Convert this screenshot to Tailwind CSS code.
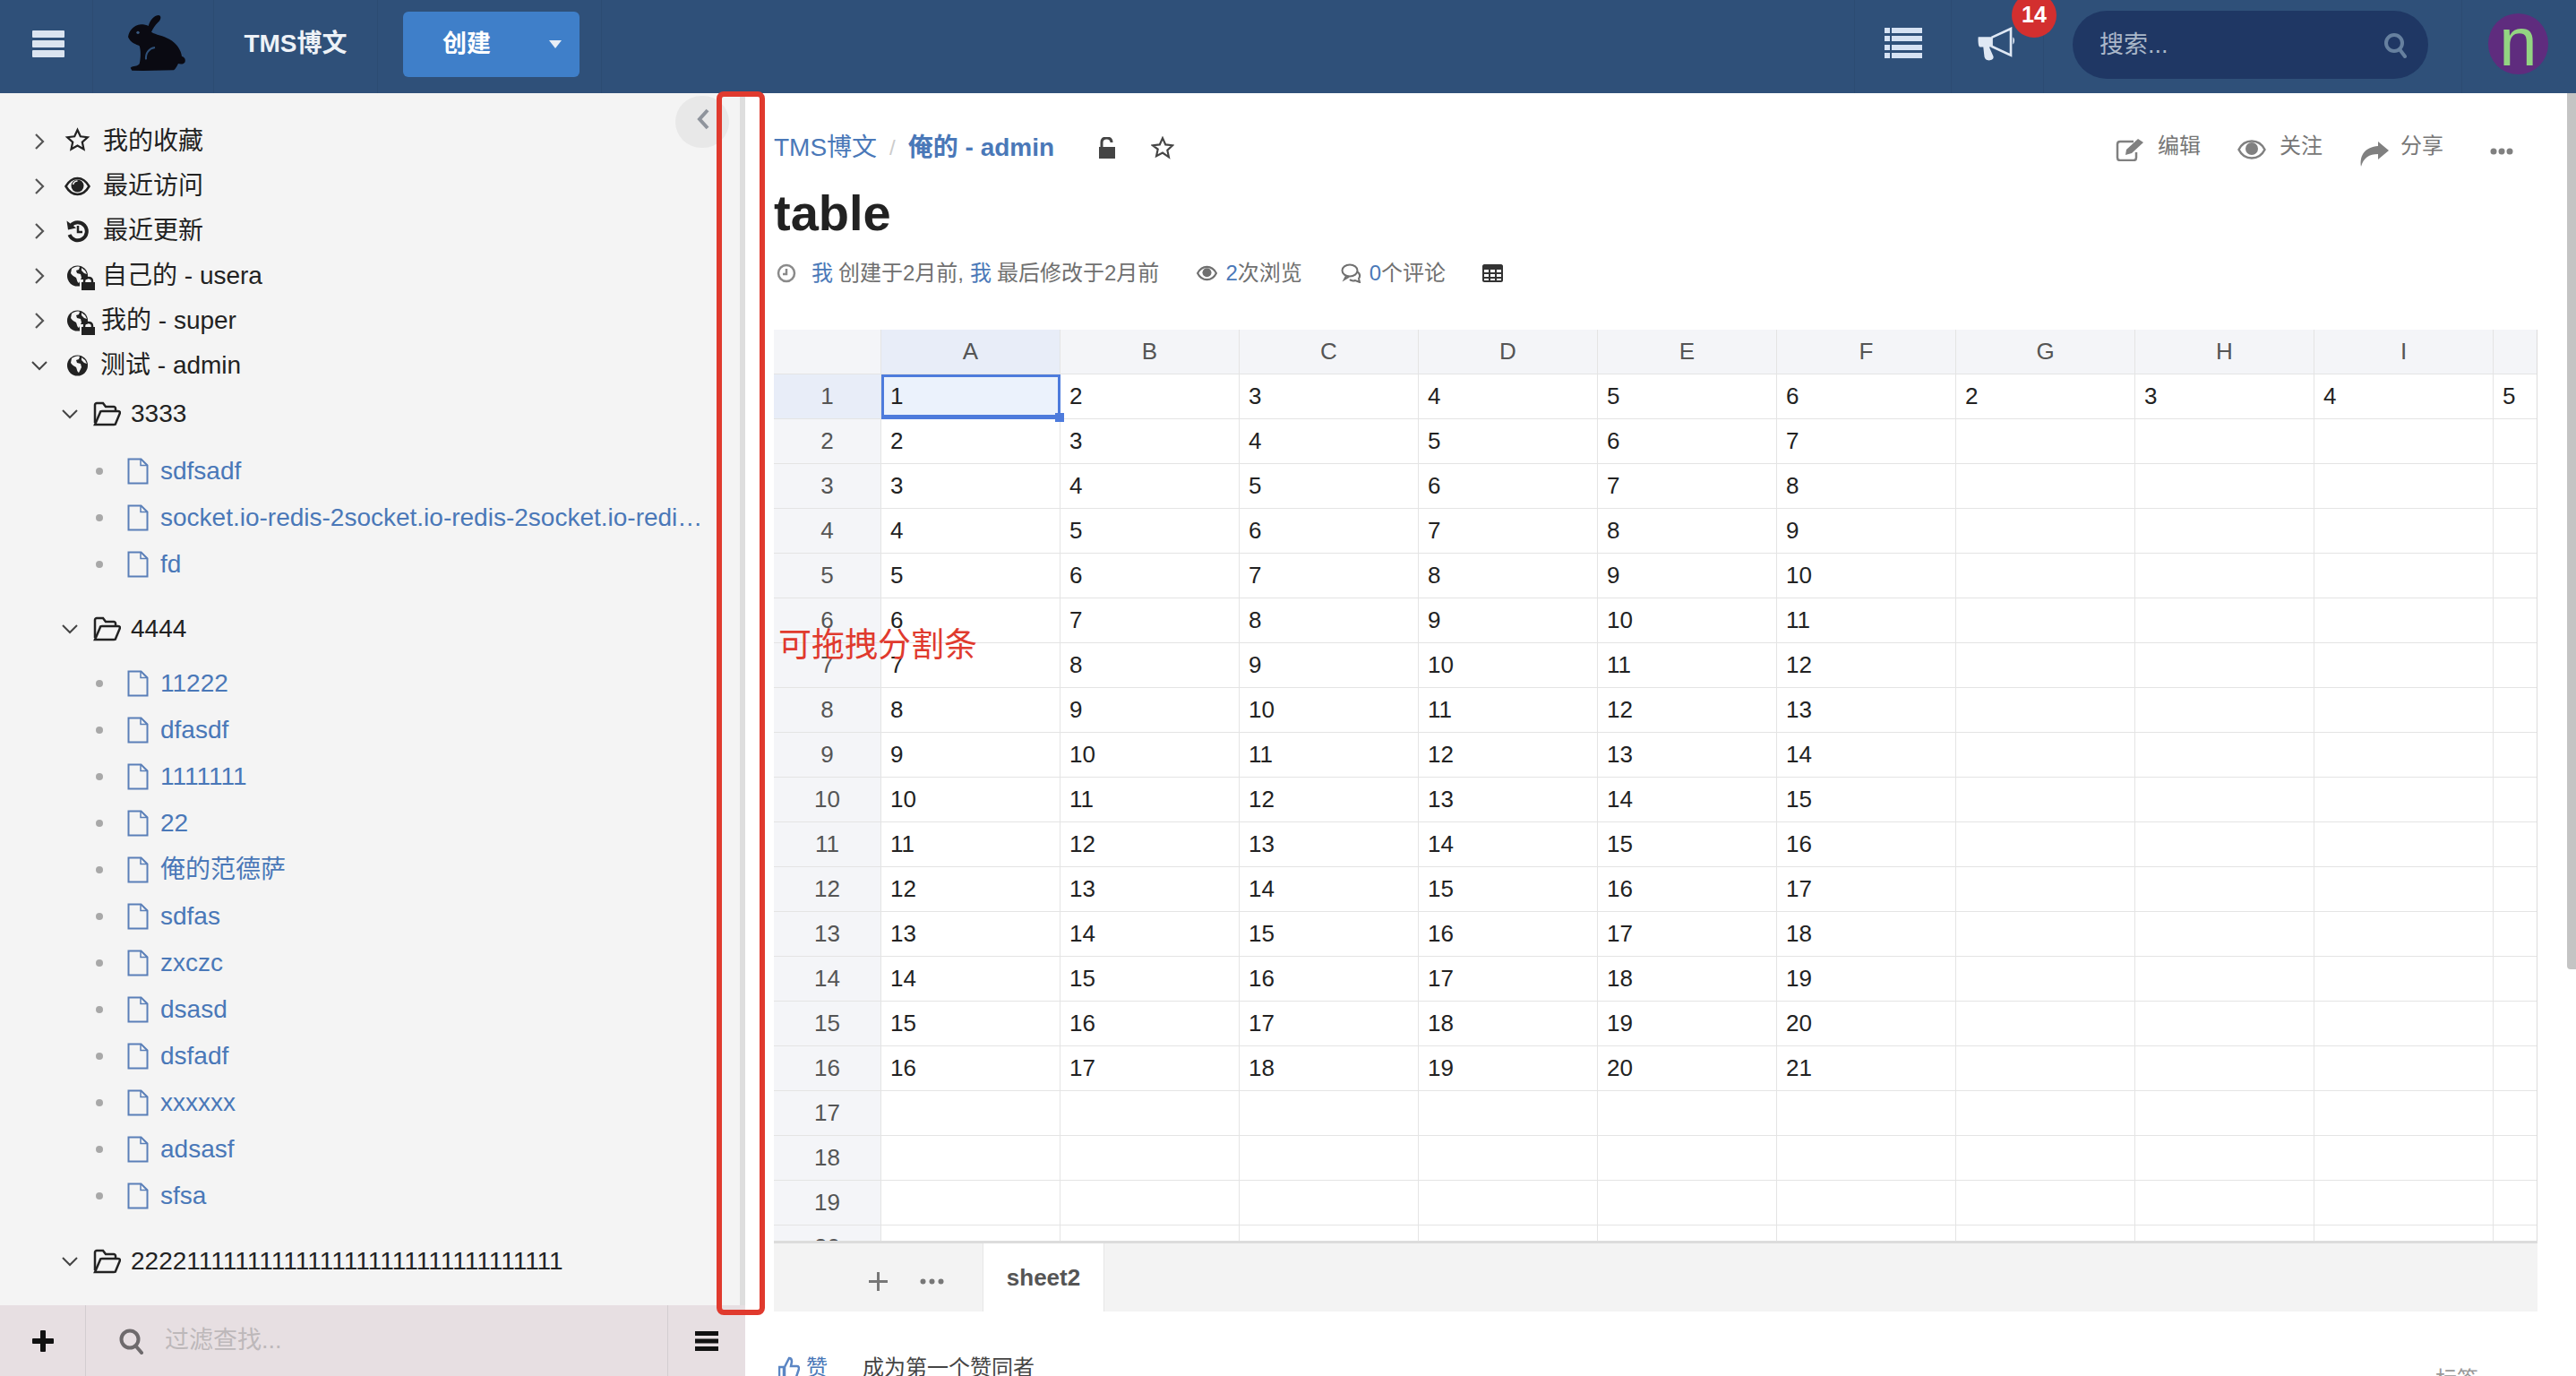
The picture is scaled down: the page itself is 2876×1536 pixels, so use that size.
<!DOCTYPE html>
<html lang="zh">
<head>
<meta charset="UTF-8">
<title>table - TMS博文</title>
<script src="https://cdn.jsdelivr.net/npm/@tailwindcss/browser@4"></script>
</head>
<body class="h-[1536px] w-[2876px] overflow-hidden bg-white font-['Liberation_Sans','Noto_Sans_CJK_SC',sans-serif] text-[28px] text-[#222]">
<!-- top bar -->
<header class="flex h-[104px] items-stretch bg-[#2f5079] text-white">
  <div class="flex w-[104px] items-center border-r border-[#2c4b72] pb-[6px] pl-[36px]">
    <svg width="36" height="30" viewBox="0 0 36 30" fill="#dbe4f0"><rect width="36" height="8" y="0" rx="1"/><rect width="36" height="8" y="11" rx="1"/><rect width="36" height="8" y="22" rx="1"/></svg>
  </div>
  <div class="flex w-[135px] items-center border-r border-[#2c4b72] pb-[9px] pl-[39px]">
    <svg width="65" height="64" viewBox="42 30 195 190" fill="#0a0a12"><path d="M110 68C115 50 128 32 145 32C155 35 152 48 142 56C132 66 125 78 120 88C135 98 160 100 180 112C205 125 220 150 222 170C232 172 236 182 232 190C226 197 216 196 210 194C205 205 200 212 195 216L92 218L55 217L50 208C60 200 72 205 80 195C85 175 85 150 80 135C70 130 50 125 42 105C45 85 60 65 85 63C95 63 105 65 110 68Z"/><circle cx="75" cy="90" r="5" fill="#3a5a80"/><path d="M102 180C100 158 112 143 132 140" fill="none" stroke="#2f5079" stroke-width="6"/></svg>
  </div>
  <div class="flex w-[183px] items-center justify-center border-r border-[#2c4b72] pb-[6px] text-[28px] font-bold text-[#eef2f7]">TMS博文</div>
  <div class="flex w-[250px] items-center border-r border-[#2c4b72] pb-[5px] pl-[28px]">
    <div class="flex h-[73px] w-[197px] items-center rounded-md bg-[#3f7fc9] pl-[44px] pr-[20px] text-[27px] font-bold">
      <span class="flex-1">创建</span>
      <svg width="14" height="9" viewBox="0 0 14 9" fill="#e8eef6"><path d="M0 0h14L7 9z"/></svg>
    </div>
  </div>
  <div class="flex-1"></div>
  <div class="flex w-[109px] items-center justify-center border-x border-[#2c4b72] pb-[8px]">
    <svg width="42" height="34" viewBox="0 0 42 34" fill="#d6e2f3"><rect width="6" height="6" y="0"/><rect x="8" width="34" height="6" y="0"/><rect width="6" height="6" y="9"/><rect x="8" width="34" height="6" y="9"/><rect width="6" height="6" y="19"/><rect x="8" width="34" height="6" y="19"/><rect width="6" height="6" y="28"/><rect x="8" width="34" height="6" y="28"/></svg>
  </div>
  <div class="relative flex w-[103px] items-center border-r border-[#2c4b72] pb-[6px] pl-[28px]">
    <svg width="43" height="38" viewBox="50 90 130 115"><path d="M100 126L165 96V186L100 156" fill="none" stroke="#dfe8f4" stroke-width="8"/><path d="M172 125c7 3 7 20 0 24z" fill="#dfe8f4"/><path d="M55 124H104V158H92L106 190C108 200 98 204 88 203C80 202 75 195 75 185L72 158H60C54 156 54 128 55 124Z" fill="#dfe8f4"/></svg>
    <span class="absolute left-[67px] top-[-8px] flex h-[50px] w-[50px] items-center justify-center rounded-full bg-[#d32f2f] text-[25px] font-bold text-white">14</span>
  </div>
  <div class="flex w-[467px] items-center border-r border-[#2c4b72] pb-[4px] pl-[32px]">
    <div class="flex h-[76px] w-[397px] items-center rounded-full bg-[#1f3764] pl-[30px] pr-[24px] text-[27px] text-[#aab7c9]">
      <span class="flex-1">搜索...</span>
      <svg width="26" height="30" viewBox="0 0 26 30" fill="none" stroke="#66809f" stroke-width="4"><circle cx="12" cy="13" r="9"/><path d="M18 20l6 8" stroke-linecap="round"/></svg>
    </div>
  </div>
  <div class="flex w-[127px] items-center pb-[6px] pl-[29px]">
    <div class="flex h-[68px] w-[67px] items-center justify-center overflow-hidden rounded-full bg-[#5f2c7e] pb-[4px] text-[76px] leading-none text-[#93d582]">n</div>
  </div>
</header>

<div class="relative flex h-[1432px]">
  <!-- sidebar -->
  <aside class="relative flex w-[832px] shrink-0 flex-col border-r-[6px] border-[#dedede] bg-[#f4f4f4]">
    <div class="absolute left-[754px] top-[3px] flex h-[58px] w-[60px] items-center rounded-full bg-[#e8e8e8] pb-[6px] pl-[24px]">
      <svg width="14" height="24" viewBox="0 0 14 24" fill="none" stroke="#8f949c" stroke-width="4"><path d="M12 2L3 12l9 10"/></svg>
    </div>
    <nav id="tree" class="flex-1 overflow-hidden pt-[29px]"></nav>
    <div class="-mr-[6px] flex h-[79px] items-center bg-[#e7dfe2]">
      <div class="flex h-full w-[96px] items-center justify-center border-r border-[#d3cdd0]">
        <svg width="24" height="24" viewBox="0 0 24 24" fill="#111"><rect x="9" width="6" height="24" rx="1"/><rect y="9" width="24" height="6" rx="1"/></svg>
      </div>
      <div class="flex h-full flex-1 items-center gap-[24px] pl-[36px] text-[27px] text-[#bdb8ba]">
        <svg width="28" height="30" viewBox="0 0 28 30" fill="none" stroke="#6e6a6c" stroke-width="4"><circle cx="13" cy="13" r="9.5"/><path d="M20 21l6 7" stroke-linecap="round"/></svg>
        <span>过滤查找...</span>
      </div>
      <div class="flex h-full w-[87px] items-center justify-center border-l border-[#d3cdd0]">
        <svg width="26" height="22" viewBox="0 0 26 22" fill="#111"><rect width="26" height="5"/><rect y="8.500" width="26" height="5"/><rect y="17" width="26" height="5"/></svg>
      </div>
    </div>
  </aside>

  <!-- article -->
  <main class="w-[2034px] shrink-0 overflow-hidden pl-[32px] pr-[33px]">
    <div class="mt-[40px] flex h-[42px] items-center text-[28px] text-[#4a78b8]">
      <span>TMS博文</span>
      <span class="mx-[14px] text-[24px] text-[#ccc]">/</span>
      <span class="font-bold">俺的 - admin</span>
      <svg class="ml-[49px]" width="20" height="24" viewBox="0 0 20 24" fill="#444"><path d="M1 11h18v13H1z"/><path d="M4 11V6c0-3 2-5 5.500-5S15 3 15 6" fill="none" stroke="#444" stroke-width="3"/></svg>
      <svg class="ml-[39px]" width="26" height="26" viewBox="0 0 24 24" fill="none" stroke="#444" stroke-width="2"><path d="M12 2l3 6.700 7.300.8-5.400 4.900 1.500 7.200L12 17.200l-6.400 3.400 1.500-7.200L1.700 9.500 9 8.700z"/></svg>
      <div class="ml-auto flex items-center text-[24px] text-[#777]">
        <svg class="relative top-[2px]" width="33" height="26" viewBox="0 0 33 26" fill="none" stroke="#808080" stroke-width="2.500"><path d="M20 4H5C3 4 2 5 2 7v15c0 2 1 3 3 3h15c2 0 3-1 3-3v-6"/><path d="M11 19l1-6L25 1l6 4-13 12z" fill="#808080" stroke="none"/></svg>
        <span class="relative -top-[2px] ml-[14px]">编辑</span>
        <svg class="relative top-[2px] ml-[41px]" width="32" height="22" viewBox="0 0 32 22" fill="none" stroke="#808080" stroke-width="2.500"><path d="M1.500 11C5 4 10 1.500 16 1.500S27 4 30.500 11C27 18 22 20.500 16 20.500S5 18 1.500 11z"/><circle cx="16" cy="10" r="7" fill="#808080" stroke="none"/></svg>
        <span class="relative -top-[2px] ml-[15px]">关注</span>
        <svg class="relative top-[7px] ml-[41px]" width="33" height="28" viewBox="0 0 33 28" fill="#808080"><path d="M21 0l12 10-12 10v-6C11 14 5 18 2 28 0 15 7 6 21 5z"/></svg>
        <span class="relative -top-[2px] ml-[13px]">分享</span>
        <svg class="relative top-[4px] ml-[52px] mr-[27px]" width="26" height="8" viewBox="0 0 26 8" fill="#808080"><circle cx="4" cy="4" r="3.500"/><circle cx="13" cy="4" r="3.500"/><circle cx="22" cy="4" r="3.500"/></svg>
      </div>
    </div>
    <h1 class="mt-[18px] text-[56px] font-bold leading-[68px] text-[#222]">table</h1>
    <div class="mt-[18px] flex h-[30px] items-center text-[24px] text-[#707070]">
      <svg class="ml-[3px]" width="22" height="22" viewBox="0 0 22 22" fill="none" stroke="#8a8a8a" stroke-width="2.500"><circle cx="11" cy="11" r="9"/><path d="M11 6v6H7"/></svg>
      <span class="ml-[17px] text-[#4a78b8]">我</span>
      <span class="ml-[6px]">创建于2月前,</span>
      <span class="ml-[7px] text-[#4a78b8]">我</span>
      <span class="ml-[6px]">最后修改于2月前</span>
      <svg class="ml-[42px]" width="23" height="18" viewBox="0 0 32 24" fill="none" stroke="#707070" stroke-width="3"><path d="M1.500 12C5 5 10 2 16 2s11 3 14.500 10C27 19 22 22 16 22S5 19 1.500 12z"/><circle cx="16" cy="11" r="7" fill="#707070" stroke="none"/></svg>
      <span class="ml-[9px] text-[#4a78b8]">2</span><span>次浏览</span>
      <svg class="ml-[43px]" width="24" height="22" viewBox="0 0 24 22" fill="none" stroke="#707070" stroke-width="2"><ellipse cx="10" cy="8" rx="8.500" ry="6.500"/><path d="M6 14l-2 4 5-3M18 9c3 2 4 5 2 8l1 4-5-2c-2 1-5 0-6-1"/></svg>
      <span class="ml-[8px] text-[#4a78b8]">0</span><span>个评论</span>
      <svg class="ml-[41px]" width="23" height="20" viewBox="0 0 23 20" fill="#333"><path d="M0 2C0 1 1 0 2 0h19c1 0 2 1 2 2v16c0 1-1 2-2 2H2c-1 0-2-1-2-2zm2 4v3h5V6zm7 0v3h5V6zm7 0v3h5V6zM2 11v3h5v-3zm7 0v3h5v-3zm7 0v3h5v-3zM2 16v2h5v-2zm7 0v2h5v-2zm7 0v2h5v-2z"/></svg>
    </div>

    <!-- sheet -->
    <div id="sheet" class="mt-[48px] grid h-[1020px] grid-cols-[120px_repeat(9,200px)_49px] auto-rows-[50px] overflow-hidden border-b-[3px] border-r border-[#dcdcdc] text-[26px] text-[#222]"></div>
    <div class="flex h-[76px] items-stretch bg-[#f3f3f3] text-[#666]">
      <div class="flex w-[127px] items-center justify-end pt-[8px]">
        <svg width="21" height="21" viewBox="0 0 21 21" fill="#777"><rect x="9" width="3" height="21"/><rect y="9" width="21" height="3"/></svg>
      </div>
      <div class="ml-[36px] flex w-[70px] items-center pt-[8px]">
        <svg width="27" height="7" viewBox="0 0 27 7" fill="#777"><circle cx="3.500" cy="3.500" r="3"/><circle cx="13.500" cy="3.500" r="3"/><circle cx="23.500" cy="3.500" r="3"/></svg>
      </div>
      <div class="flex w-[136px] items-center justify-center border-x border-[#e6e6e6] bg-white text-[26px] font-bold text-[#555]">sheet2</div>
    </div>
    <div class="mt-[47px] flex items-center text-[24px] leading-[32px]">
      <svg class="ml-[5px]" width="24" height="26" viewBox="0 0 24 26" fill="none" stroke="#5b86c4" stroke-width="2.500"><path d="M7 12l5-10c2 0 3 2 3 4l-1 5h7c2 0 2 2 2 3l-3 9c0 1-1 2-3 2H7zM1 12h5v13H1z"/></svg>
      <span class="ml-[7px] text-[#4a78b8]">赞</span>
      <span class="ml-[39px] text-[#444]">成为第一个赞同者</span>
      <span class="relative top-[13px] ml-auto mr-[66px] text-[#999]">标签</span>
    </div>
  </main>

  <!-- page scrollbar -->
  <div class="h-[978px] w-[10px] rounded-bl-sm bg-[#c4c4c4]"></div>

  <!-- annotation drawn over the screenshot -->
  <div class="absolute left-[800px] top-[-2px] h-[1366px] w-[54px] rounded-lg border-[6px] border-[#e03a2e]"></div>
  <div class="absolute left-[869px] top-[595px] text-[37px] leading-[44px] text-[#e03a2e]">可拖拽分割条</div>
</div>

<script>
  const caret = {
    right: '<svg width="12" height="20" viewBox="0 0 12 20" fill="none" stroke="#555" stroke-width="2.200"><path d="M2 2l8 8-8 8"/></svg>',
    down: '<svg width="18" height="12" viewBox="0 0 18 12" fill="none" stroke="#444" stroke-width="2"><path d="M1 2l8 8 8-8"/></svg>'
  };
  const globe = '<circle cx="14.500" cy="17" r="11.500" fill="#222"/><path d="M8 9c3-2 6-3 9-2l-1 3-3 1 1 3 4 1 1 4-3 6c-2-1-2-4-3-6-2-1-5-3-6-5zM19 8l4 3 2 4-3-1-3-3z" fill="#f4f4f4"/>';
  const lock = '<path d="M17 21h18v13H17z" fill="#f4f4f4"/><path d="M19 24h15v9H19z" fill="#222"/><path d="M22 24v-1c0-3 2-4 4.500-4s4.500 1 4.500 4v1" fill="none" stroke="#222" stroke-width="2.500"/>';
  const rowIcons = {
    star: '<path d="M14.500 4l3.300 7.300 8 .9-6 5.400 1.700 7.900-7-4-7 4 1.700-7.900-6-5.400 8-.9z" fill="none" stroke="#222" stroke-width="2.200"/>',
    eye: '<path d="M1.500 17C5 11 9 8 14.500 8S24 11 27.500 17C24 23 20 26 14.500 26S5 23 1.500 17z" fill="none" stroke="#222" stroke-width="2.500"/><circle cx="14.500" cy="16.500" r="7" fill="#222"/><path d="M9.500 15c1-3 3-4 5-4" fill="none" stroke="#f4f4f4" stroke-width="1.500"/>',
    history: '<path d="M7 11A10 10 0 1 1 5.500 21" fill="none" stroke="#222" stroke-width="4"/><path d="M2.500 5.500l1.500 10 9-2z" fill="#222"/><path d="M15 11v7h5" fill="none" stroke="#222" stroke-width="2.500"/>',
    globeLock: globe + lock,
    globe: globe
  };
  const icon = (name) => `<svg width="36" height="34" viewBox="0 0 36 34">${rowIcons[name]}</svg>`;
  const folder = '<svg width="31" height="28" viewBox="0 0 31 28" fill="none" stroke="#222" stroke-width="2.500"><path d="M2 24V4c0-1 1-2 2-2h7l3 4h9c1 0 2 1 2 2v3"/><path d="M2 26l6-14c0-1 1-1 2-1h18c2 0 2 1 2 2l-5 12c0 1-1 1-2 1z"/></svg>';
  const file = '<svg width="24" height="30" viewBox="0 0 24 30" fill="none" stroke="#5a7fb8" stroke-width="2"><path d="M1.500 1.500h14l7 7v20h-21z"/><path d="M15 1.500v7h7.500" stroke-width="1.500"/></svg>';

  const tops = [
    ['star', '我的收藏', 'ml-[7px]'], ['eye', '最近访问', 'ml-[7px]'], ['history', '最近更新', 'ml-[7px]'],
    ['globeLock', '自己的 - usera', 'ml-[6px]'], ['globeLock', '我的 - super', 'ml-[5px]'], ['globe', '测试 - admin', 'ml-[4px]']
  ];
  const folders = [
    { name: '3333', mt: 'mt-[3px]', listMt: 'mt-[12px]', files: ['sdfsadf', 'socket.io-redis-2socket.io-redis-2socket.io-redis-2socket.io-redis-2', 'fd'] },
    { name: '4444', mt: 'mt-[20px]', listMt: 'mt-[9px]', files: ['11222', 'dfasdf', '1111111', '22', '俺的范德萨', 'sdfas', 'zxczc', 'dsasd', 'dsfadf', 'xxxxxx', 'adsasf', 'sfsa'] },
    { name: '22221111111111111111111111111111111', mt: 'mt-[21px]', listMt: '', files: [] }
  ];

  let html = '';
  tops.forEach((t, i) => {
    const open = i === 5;
    html += `<div class="flex h-[50px] items-center ${open ? 'pl-[35px]' : 'pl-[38px]'}">
      ${open ? caret.down : caret.right}
      <span class="flex ${open ? 'ml-[19px]' : 'ml-[22px]'}">${icon(t[0])}</span>
      <span class="${t[2]}">${t[1]}</span></div>`;
  });
  folders.forEach(f => {
    html += `<div class="${f.mt} flex h-[52px] items-center pl-[69px]">${caret.down}<span class="ml-[17px] flex">${folder}</span><span class="ml-[11px]">${f.name}</span></div>`;
    if (f.files.length) {
      html += `<ul class="${f.listMt}">` + f.files.map(n => `<li class="flex h-[52px] items-center pl-[107px] text-[#4a78b8]">
        <span class="h-[8px] w-[8px] rounded-full bg-[#a8a8a8]"></span>
        <span class="ml-[27px] flex">${file}</span>
        <span class="ml-[13px] w-[606px] truncate">${n}</span></li>`).join('') + '</ul>';
    }
  });
  document.getElementById('tree').innerHTML = html;

  const letters = ['A', 'B', 'C', 'D', 'E', 'F', 'G', 'H', 'I', ''];
  let cells = '<div class="border-b border-r border-[#e4e4e4] bg-[#f4f5f8]"></div>';
  letters.forEach((l, i) => {
    cells += `<div class="flex items-center justify-center border-b border-r border-[#e4e4e4] text-[#555] ${i === 0 ? 'bg-[#e8edf8]' : 'bg-[#f4f5f8]'}">${l}</div>`;
  });
  for (let r = 1; r <= 20; r++) {
    cells += `<div class="flex items-center justify-center border-b border-r border-[#e4e4e4] text-[#555] ${r === 1 ? 'bg-[#e8edf8]' : 'bg-[#f4f5f8]'}">${r}</div>`;
    for (let c = 0; c < 10; c++) {
      let v = '';
      if (r <= 16 && c < 6) v = r + c;
      if (r === 1 && c >= 6) v = c - 4;
      if (r === 1 && c === 0) {
        cells += `<div class="relative flex items-center border-x-[3px] border-b-[5px] border-t-[3px] border-[#4d7bdc] bg-[#ebf2fc] pl-[7px]">${v}<span class="absolute -bottom-[8px] -right-[7px] h-[10px] w-[10px] bg-[#4d7bdc]"></span></div>`;
      } else {
        cells += `<div class="flex items-center border-b border-r border-[#e4e4e4] pl-[10px]">${v}</div>`;
      }
    }
  }
  document.getElementById('sheet').innerHTML = cells;
</script>
</body>
</html>
